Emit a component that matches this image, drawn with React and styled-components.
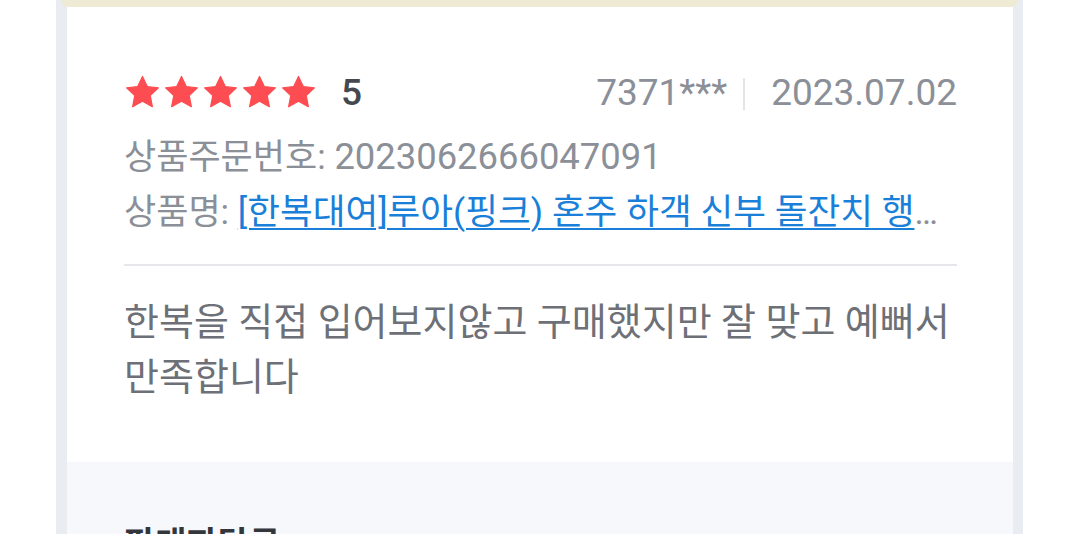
import React from "react";
import styled, { createGlobalStyle } from "styled-components";

const GlobalStyle = createGlobalStyle`
  html, body {
    margin: 0;
    padding: 0;
    background: #ffffff;
  }
  body {
    font-family: Roboto, "Noto Sans CJK KR", sans-serif;
    -webkit-font-smoothing: antialiased;
  }
`;

const Star = ({ size = 37 }) => (
  <svg width={size} height={size} viewBox="0 0 24 24">
    <polygon
      points="12,1.6 15.1,8.1 22.3,9 17,14 18.4,21.2 12,17.7 5.6,21.2 7,14 1.7,9 8.9,8.1"
      fill="#fd4d52"
      stroke="#fd4d52"
      strokeWidth="0.8"
      strokeLinejoin="round"
    />
  </svg>
);

const ReviewCard = ({ rating, user, date, orderNo, product, body }) => {
  return (
    <Panel>
      <Body>
        <TopRow>
          <Rating>
            <Stars>
              {Array.from({ length: rating }).map((_, i) => (
                <Star key={i} />
              ))}
            </Stars>
            <Score>{rating}</Score>
          </Rating>
          <Meta>
            <span>{user}</span>
            <Sep />
            <span>{date}</span>
          </Meta>
        </TopRow>
        <InfoLine>
          <Label>상품주문번호:</Label> <Value>{orderNo}</Value>
        </InfoLine>
        <InfoLine>
          <Label>상품명:</Label> <ProductLink href="#">{product}</ProductLink>
        </InfoLine>
        <Divider />
        <ReviewText>{body}</ReviewText>
      </Body>
      <ReplySection>
        <ReplyTitle>판매자답글</ReplyTitle>
      </ReplySection>
    </Panel>
  );
};

const App = () => {
  return (
    <>
      <GlobalStyle />
      <Page>
        <Frame>
          <PrevCardEdge />
          <ReviewCard
            rating={5}
            user="7371***"
            date="2023.07.02"
            orderNo="2023062666047091"
            product="[한복대여]루아(핑크) 혼주 하객 신부 돌잔치 행사 대여"
            body="한복을 직접 입어보지않고 구매했지만 잘 맞고 예뻐서 만족합니다"
          />
        </Frame>
      </Page>
    </>
  );
};

const Page = styled.div`
  height: 534px;
  overflow: hidden;
  padding: 0 57px 0 56px;
`;

const Frame = styled.div`
  height: 534px;
  background: #e9ecf0;
  display: flex;
  flex-direction: column;
`;

const PrevCardEdge = styled.div`
  height: 7px;
  margin: 0 5px;
  background: #eeeAd3;
  border-radius: 0 0 9px 9px;
  flex-shrink: 0;
`;

const Panel = styled.div`
  margin: 0 10px 0 11px;
  background: #ffffff;
  flex: 1;
  display: flex;
  flex-direction: column;
`;

const Body = styled.div`
  padding: 58px 56px 57px 57px;
`;

const TopRow = styled.div`
  height: 54px;
  margin-bottom: 11px;
  display: flex;
  align-items: center;
  justify-content: space-between;
`;

const Rating = styled.div`
  display: flex;
  align-items: center;
`;

const Stars = styled.div`
  display: flex;
  gap: 2px;
`;

const Score = styled.span`
  margin-left: 24px;
  font-size: 37px;
  font-weight: 500;
  color: #45484f;
`;

const Meta = styled.div`
  display: flex;
  align-items: center;
  font-size: 37px;
  color: #8b8f97;
`;

const Sep = styled.i`
  display: block;
  width: 2px;
  height: 32px;
  margin: 4px 26px 0 16px;
  background: #e2e4e7;
`;

const InfoLine = styled.div`
  font-size: 35px;
  line-height: 54px;
  color: #8b8f97;
  white-space: nowrap;
  overflow: hidden;
  text-overflow: ellipsis;
`;

const Label = styled.span`
  font-size: 35px;
`;

const Value = styled.span`
  font-size: 36.4px;
`;

const ProductLink = styled.a`
  font-size: 35.6px;
  color: #1a7fd8;
  text-decoration: underline;
  text-decoration-thickness: 2px;
  text-underline-offset: 4px;
`;

const Divider = styled.hr`
  margin: 24px 0 0;
  border: none;
  height: 2px;
  background: #e5e7ea;
`;

const ReviewText = styled.p`
  margin: 29px 0 0;
  font-size: 38px;
  line-height: 55px;
  color: #6d7077;
  word-break: keep-all;
`;

const ReplySection = styled.div`
  flex: 1;
  background: #f7f8fb;
  padding: 62px 56px 0 57px;
`;

const ReplyTitle = styled.h3`
  margin: 0;
  font-size: 34px;
  font-weight: 700;
  color: #33363b;
  line-height: 40px;
`;

export default App;
